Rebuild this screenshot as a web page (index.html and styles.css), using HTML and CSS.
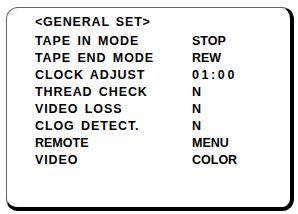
FILE: index.html
```html
<!DOCTYPE html>
<html>
<head>
<meta charset="utf-8">
<link rel="stylesheet" href="styles.css">
</head>
<body>
<div class="panel">
  <div class="title">&lt;GENERAL SET&gt;</div>
  <div class="grid">
    <div class="label">TAPE IN MODE</div><div class="value">STOP</div>
    <div class="label">TAPE END MODE</div><div class="value">REW</div>
    <div class="label">CLOCK ADJUST</div><div class="value wide">01:00</div>
    <div class="label">THREAD CHECK</div><div class="value">N</div>
    <div class="label">VIDEO LOSS</div><div class="value">N</div>
    <div class="label">CLOG DETECT.</div><div class="value">N</div>
    <div class="label tight">REMOTE</div><div class="value">MENU</div>
    <div class="label">VIDEO</div><div class="value">COLOR</div>
  </div>
</div>
</body>
</html>
```
FILE: styles.css
```css
html, body {
  margin: 0;
  padding: 0;
  background: #fff;
}
body {
  width: 298px;
  height: 214px;
  overflow: hidden;
  font-family: "Liberation Sans", Arial, sans-serif;
  font-weight: bold;
  font-size: 12.5px;
  line-height: 17px;
  color: #000;
}
.panel {
  box-sizing: border-box;
  margin: 7px 0 0 6px;
  width: 288px;
  height: 204px;
  border: 1px solid #666;
  border-right: 4px solid #000;
  border-bottom: 4px solid #000;
  border-radius: 12px;
  padding: 6px 0 0 28px;
}
.title {
  letter-spacing: 0.8px;
  word-spacing: 2px;
  margin-bottom: 2px;
}
.grid {
  display: grid;
  grid-template-columns: 157px auto;
}
.label {
  letter-spacing: 0.9px;
  word-spacing: 2px;
}
.label.tight {
  letter-spacing: 0;
}
.value {
  letter-spacing: 0;
}
.value.wide {
  letter-spacing: 2.6px;
}
```
